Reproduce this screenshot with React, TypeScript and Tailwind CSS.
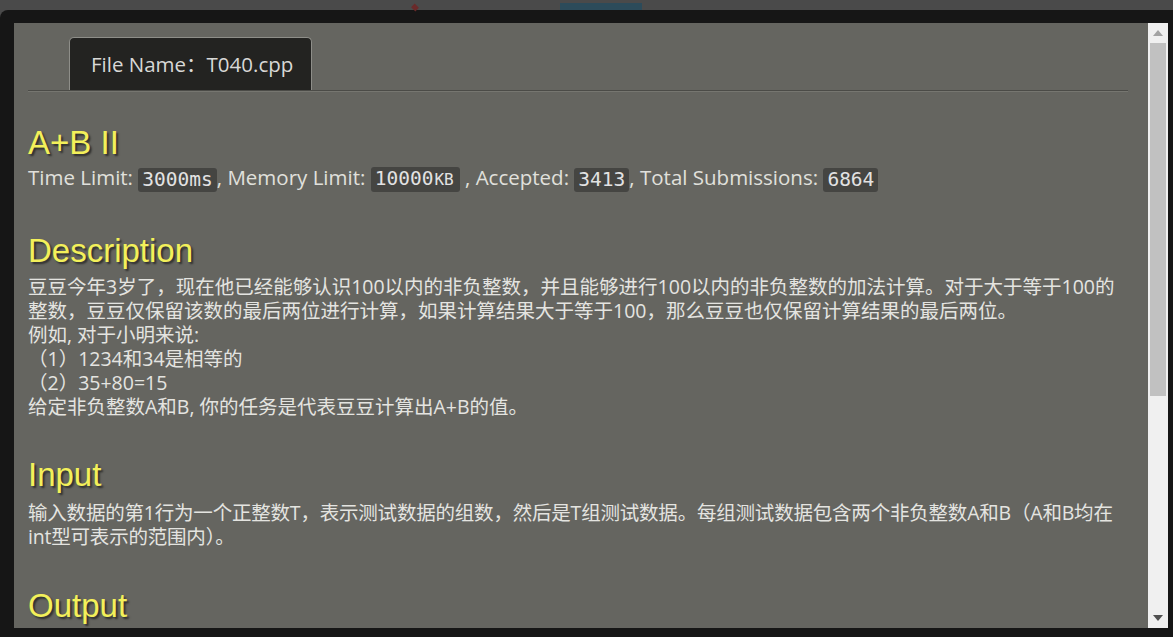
export default function App() {
  const heading =
    "font-['Liberation_Sans',Arial,sans-serif] text-[33px] leading-[36px] text-[#f3f05a] [text-shadow:2px_2px_2px_rgba(0,0,0,0.55)]";
  const badge =
    "inline-block bg-[#454542] rounded-[3px] px-[4px] font-['DejaVu_Sans_Mono',monospace] text-[19.5px] leading-[24px] text-[#e2e2e2] align-middle";
  const body = "text-[19.5px] leading-[24px] whitespace-nowrap text-[#e4e4e0]";
  return (
    <div className="w-[1173px] h-[637px] bg-[#4a4a4a] flex flex-col overflow-hidden">
      <div className="h-[10px] relative shrink-0">
        <div className="absolute left-[560px] top-[3px] w-[82px] h-[7px] bg-[#2c4b5a]" />
        <div className="absolute left-[412px] top-[5px] w-[6px] h-[5px] bg-[#6a2a2a] rotate-45" />
      </div>
      <div className="flex-1 bg-[#161616] rounded-tl-[8px] flex pl-[14px] pt-[13px] pr-[5px] pb-[9px]">
        <div className="w-[1134px] h-[605px] bg-[#656560] overflow-hidden pt-[14px] pl-[14px] pr-[20px] font-['Open_Sans','Noto_Sans_CJK_SC',sans-serif] text-[#e0e0dc]">
          <div className="flex pl-[41px]">
            <div className="h-[53px] w-[243px] bg-[#232321] border border-b-0 border-[#8e8e89] rounded-t-[5px] flex items-center pl-[21px] text-[20.5px] text-[#d8d8d6]">
              File Name：T040.cpp
            </div>
          </div>
          <div className="h-[1px] bg-[#4b4b47]" />
          <div className="h-[1px] bg-[#767670]" />

          <div className={`${heading} mt-[33px]`}>A+B II</div>
          <div className="mt-[3px] text-[20.5px] leading-[26px] whitespace-nowrap">
            Time Limit: <span className={badge}>3000ms</span>, Memory Limit:{" "}
            <span className={badge}>
              10000<span className="text-[16px] pl-[1px] pr-[2px]">KB</span>
            </span>{" "}
            , Accepted: <span className={badge}>3413</span>, Total Submissions:{" "}
            <span className={badge}>6864</span>
          </div>

          <div className={`${heading} mt-[41px]`}>Description</div>
          <div className={`mt-[6px] ${body}`}>
            <div>
              豆豆今年3岁了，现在他已经能够认识100以内的非负整数，并且能够进行100以内的非负整数的加法计算。对于大于等于100的
            </div>
            <div>整数，豆豆仅保留该数的最后两位进行计算，如果计算结果大于等于100，那么豆豆也仅保留计算结果的最后两位。</div>
            <div>例如, 对于小明来说:</div>
            <div>（1）1234和34是相等的</div>
            <div>（2）35+80=15</div>
            <div>给定非负整数A和B, 你的任务是代表豆豆计算出A+B的值。</div>
          </div>

          <div className={`${heading} mt-[38px]`}>Input</div>
          <div className={`mt-[8px] ${body} tracking-[-0.2px]`}>
            <div>
              输入数据的第1行为一个正整数T，表示测试数据的组数，然后是T组测试数据。每组测试数据包含两个非负整数A和B（A和B均在
            </div>
            <div>int型可表示的范围内）。</div>
          </div>

          <div className={`${heading} mt-[39px]`}>Output</div>
        </div>
        <div className="w-[20px] h-[605px] bg-[#f0f0f0] flex flex-col">
          <div className="h-[20px] flex items-center justify-center">
            <svg width="10" height="6" viewBox="0 0 10 6">
              <polygon points="5,0 10,6 0,6" fill="#a3a3a3" />
            </svg>
          </div>
          <div className="mx-[2px] h-[353px] bg-[#c1c1c1]" />
          <div className="flex-1" />
          <div className="h-[20px] flex items-center justify-center">
            <svg width="10" height="6" viewBox="0 0 10 6">
              <polygon points="0,0 10,0 5,6" fill="#505050" />
            </svg>
          </div>
        </div>
      </div>
    </div>
  );
}
